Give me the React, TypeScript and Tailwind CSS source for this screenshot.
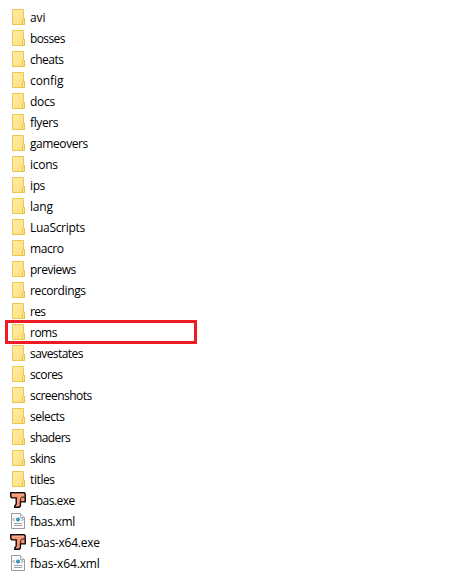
type Kind = 'folder' | 'exe' | 'xml';

const files: { name: string; kind: Kind; tracking: string }[] = [
  { name: 'avi', kind: 'folder', tracking: 'tracking-[-0.1px]' },
  { name: 'bosses', kind: 'folder', tracking: 'tracking-[-0.6px]' },
  { name: 'cheats', kind: 'folder', tracking: 'tracking-[-0.5px]' },
  { name: 'config', kind: 'folder', tracking: 'tracking-[-0.1px]' },
  { name: 'docs', kind: 'folder', tracking: 'tracking-[-0.3px]' },
  { name: 'flyers', kind: 'folder', tracking: 'tracking-[-0.4px]' },
  { name: 'gameovers', kind: 'folder', tracking: 'tracking-[-0.42px]' },
  { name: 'icons', kind: 'folder', tracking: 'tracking-[-0.25px]' },
  { name: 'ips', kind: 'folder', tracking: 'tracking-[-0.4px]' },
  { name: 'lang', kind: 'folder', tracking: 'tracking-[-0.2px]' },
  { name: 'LuaScripts', kind: 'folder', tracking: 'tracking-[-0.3px]' },
  { name: 'macro', kind: 'folder', tracking: 'tracking-[-0.4px]' },
  { name: 'previews', kind: 'folder', tracking: 'tracking-[-0.5px]' },
  { name: 'recordings', kind: 'folder', tracking: 'tracking-[-0.38px]' },
  { name: 'res', kind: 'folder', tracking: 'tracking-[-0.7px]' },
  { name: 'roms', kind: 'folder', tracking: 'tracking-[-0.5px]' },
  { name: 'savestates', kind: 'folder', tracking: 'tracking-[-0.57px]' },
  { name: 'scores', kind: 'folder', tracking: 'tracking-[-0.6px]' },
  { name: 'screenshots', kind: 'folder', tracking: 'tracking-[-0.54px]' },
  { name: 'selects', kind: 'folder', tracking: 'tracking-[-0.5px]' },
  { name: 'shaders', kind: 'folder', tracking: 'tracking-[-0.63px]' },
  { name: 'skins', kind: 'folder', tracking: 'tracking-[-0.6px]' },
  { name: 'titles', kind: 'folder', tracking: 'tracking-[-0.4px]' },
  { name: 'Fbas.exe', kind: 'exe', tracking: 'tracking-[-0.5px]' },
  { name: 'fbas.xml', kind: 'xml', tracking: 'tracking-[-0.3px]' },
  { name: 'Fbas-x64.exe', kind: 'exe', tracking: 'tracking-[-0.25px]' },
  { name: 'fbas-x64.xml', kind: 'xml', tracking: 'tracking-[-0.12px]' },
];

function FolderIcon() {
  return (
    <svg className="mb-px block h-4 w-4" viewBox="0 0 16 16">
      <defs>
        <linearGradient id="folder" x1="0" y1="0" x2="1" y2="1">
          <stop offset="0" stopColor="#ffeca6" />
          <stop offset="1" stopColor="#ffdf80" />
        </linearGradient>
      </defs>
      <path d="M2.5.5h11v9h1v6h-12z" fill="url(#folder)" stroke="#ebc750" />
      <path d="M12.5 15.5v-5l1-1h1v6z" fill="#ffe692" stroke="#e8c24a" />
    </svg>
  );
}

function ExeIcon() {
  return (
    <svg className="mb-px block h-4 w-4" viewBox="0 0 16 16">
      <path
        d="M.8.8h4l1 .5 1-.5h7.4l1 1v8.1h-4.8v4l-1.2 1.3H4.8v-1.5l1.4-1.6V5.9H1.8L.8 4.8z"
        fill="#f99678"
        stroke="#080505"
        strokeWidth="1.4"
        strokeLinejoin="miter"
      />
      <path d="M2 2.2h11.5" stroke="#ffb79d" />
      <path d="M10.6 9.5V6.3l1.3-1.2h2.9" fill="none" stroke="#281510" strokeWidth="1" />
    </svg>
  );
}

function XmlIcon() {
  return (
    <svg className="mb-px block h-4 w-4" viewBox="0 0 16 16">
      <path d="M1.5.5h9l4 4v11h-13z" fill="#fbfbfc" stroke="#999ba1" />
      <path d="M10.5.5v4h4" fill="#eeeeef" stroke="#a9abb0" />
      <path d="M4.5 5 3 6.5 4.5 8m7-3L13 6.5 11.5 8" fill="none" stroke="#66768c" strokeWidth=".9" />
      <circle cx="8" cy="6.5" r="2" fill="#2685bb" />
      <path d="M7 5.2h1.4v1.5H7z" fill="#59ba8b" />
      <path d="M4 10.5h8M4 12.5h8" stroke="#9ca1aa" />
    </svg>
  );
}

function Row({ name, kind, tracking }: { name: string; kind: Kind; tracking: string }) {
  return (
    <li className="relative flex h-[21px] items-center gap-1 pl-[10px]">
      {kind === 'folder' ? <FolderIcon /> : kind === 'exe' ? <ExeIcon /> : <XmlIcon />}
      <span className={`whitespace-nowrap leading-[21px] ${tracking}`}>{name}</span>
      {name === 'roms' && (
        <span className="absolute -top-[2px] left-[5px] h-6 w-48 border-[3px] border-[#ed1c24]" />
      )}
    </li>
  );
}

export default function App() {
  return (
    <main className="h-[575px] w-[460px] overflow-hidden bg-white pt-[7px] font-['Open_Sans','Noto_Sans',sans-serif] text-[12px] text-black">
      <ul>
        {files.map((file) => (
          <Row key={file.name} {...file} />
        ))}
      </ul>
    </main>
  );
}
